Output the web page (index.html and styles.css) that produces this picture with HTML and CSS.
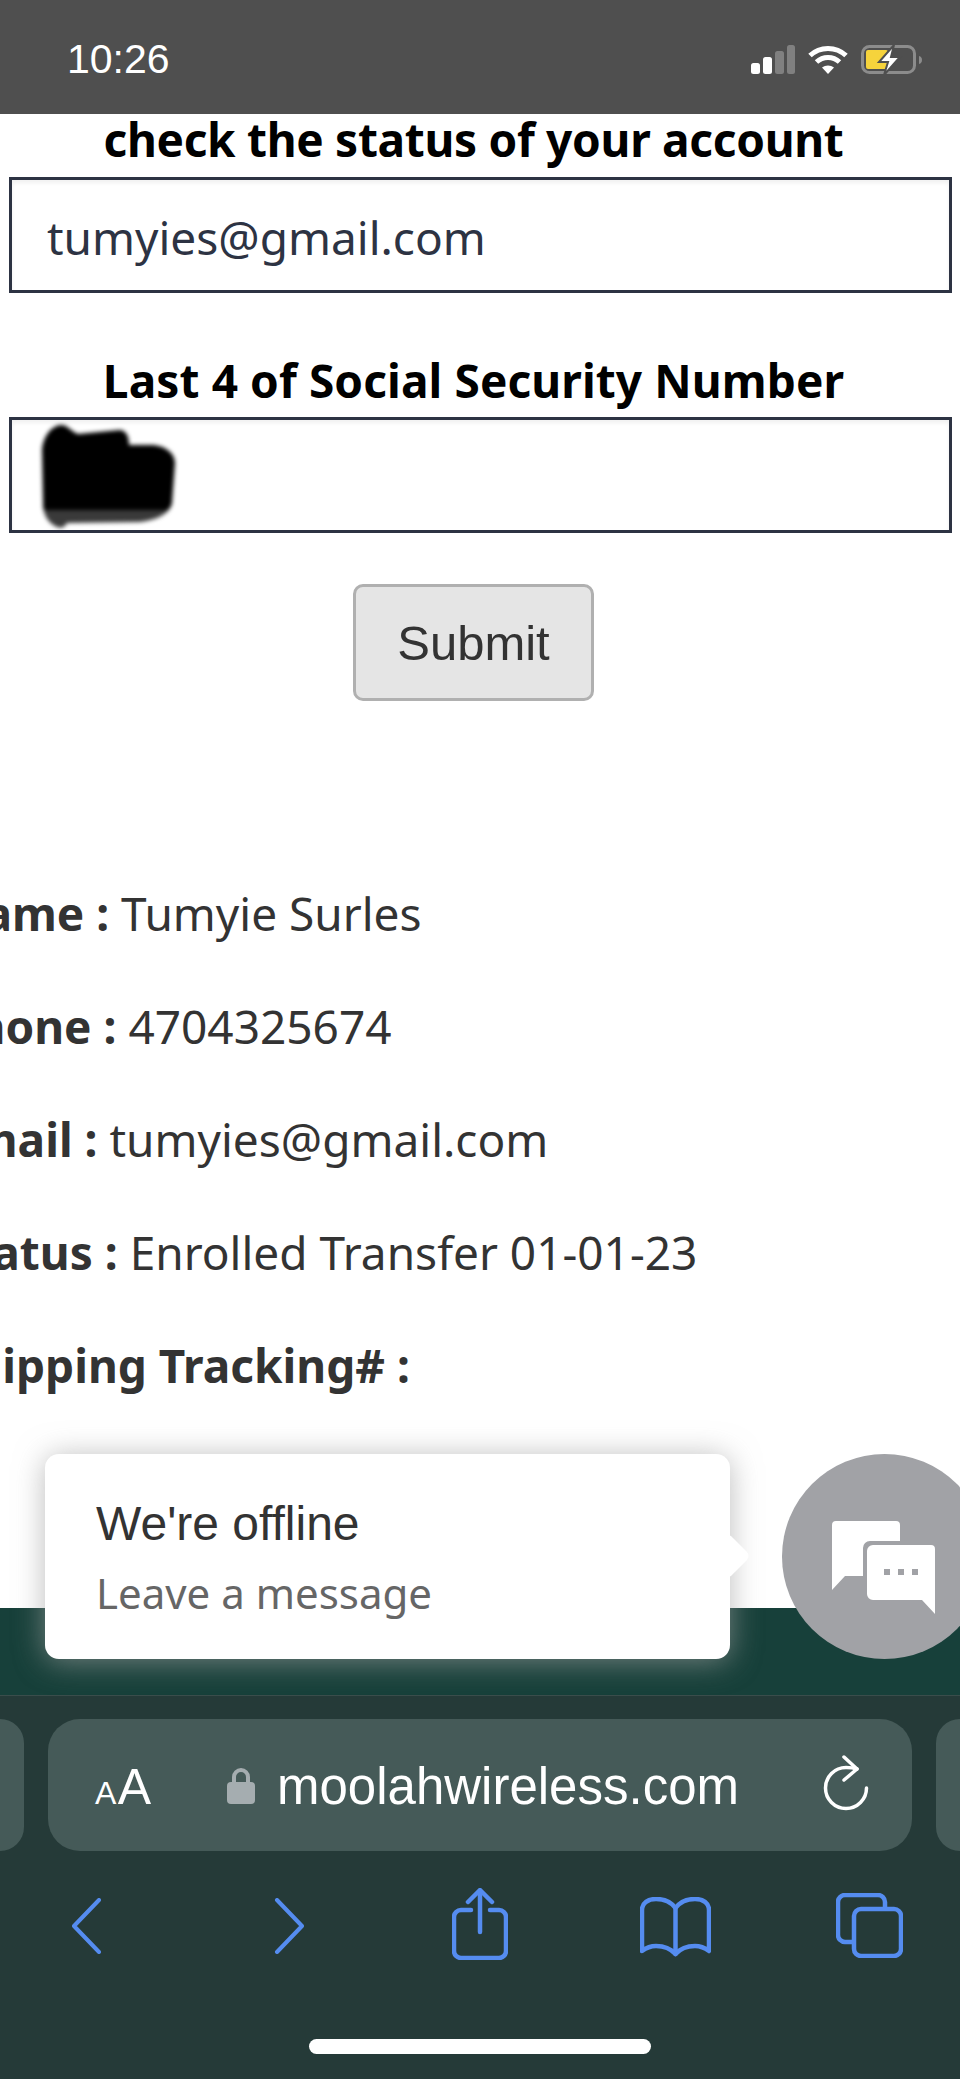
FILE: index.html
```html
<!DOCTYPE html>
<html lang="en">
<head>
  <meta charset="UTF-8">
  <meta name="viewport" content="width=device-width, initial-scale=1.0">
  <title>moolahwireless.com</title>
  <link rel="stylesheet" href="styles.css">
</head>
<body>
  <div class="phone">
    <!-- Status bar -->
    <div class="status-bar">
      <span class="clock">10:26</span>
      <div class="status-icons">
        <svg class="signal" width="44" height="30" viewBox="0 0 44 30">
          <rect x="0" y="18" width="9" height="11" rx="2.5" fill="#fff"/>
          <rect x="12" y="12" width="9" height="17" rx="2.5" fill="#fff"/>
          <rect x="24" y="6" width="9" height="23" rx="2.5" fill="#808080"/>
          <rect x="36" y="0" width="8" height="29" rx="2.5" fill="#808080"/>
        </svg>
        <svg class="wifi" width="40" height="30" viewBox="0 0 40 30" fill="none" stroke="#fff" stroke-width="5">
          <path d="M2 10.5c10-9.500 26-9.500 36 0"/>
          <path d="M8.500 17c6.500-6 16.500-6 23 0"/>
          <path d="M20 29l-6-6.500c3.500-2.800 8.500-2.800 12 0z" fill="#fff" stroke="none"/>
        </svg>
        <svg class="battery" width="62" height="30" viewBox="0 0 62 30">
          <rect x="1.500" y="1.500" width="52" height="26" rx="7" fill="none" stroke="#8c8c8c" stroke-width="3"/>
          <rect x="5" y="5" width="22" height="19" rx="2" fill="#f6d33c"/>
          <path d="M58 11c2 .5 3 2 3 4s-1 3.500-3 4z" fill="#8c8c8c"/>
          <path d="M33 0L18 17h9l-4 13 16-18h-9z" fill="#fff" stroke="#4f4f4f" stroke-width="2"/>
        </svg>
      </div>
    </div>

    <!-- Page -->
    <div class="page">
      <form class="lookup">
        <label class="field-label first" for="email">check the status of your account</label>
        <div class="text-box" id="email">tumyies@gmail.com</div>
        <label class="field-label" for="ssn">Last 4 of Social Security Number</label>
        <div class="text-box" id="ssn">
          <svg class="scribble" width="138" height="108" viewBox="0 0 138 108">
            <path d="M3 80h129c-2 10-14 17-32 19l-73 1c-2 4-6 6-10 4-9-4-14-12-14-24z" fill="#3a3a3a"/>
            <path d="M21 2c7 0 9 6 17 9l42-4c7 1 9 7 9 15h24c12 1 22 8 22 18l-3 40c-1 3-2 5-4 7H4c-1-2-1-4-1-7L2 27C3 15 10 3 21 2z" fill="#000"/>
          </svg>
        </div>
        <div class="submit-row"><div class="submit-btn">Submit</div></div>
      </form>

      <div class="details">
        <p><b>Name :</b> Tumyie Surles</p>
        <p><b>Phone :</b> 4704325674</p>
        <p><b>Email :</b> tumyies@gmail.com</p>
        <p><b>Status :</b> Enrolled Transfer 01-01-23</p>
        <p><b>Shipping Tracking# :</b></p>
      </div>

      <div class="page-footer"></div>

      <!-- Chat widget -->
      <div class="chat-popup">
        <div class="chat-title">We're offline</div>
        <div class="chat-sub">Leave a message</div>
        <span class="chat-arrow"></span>
      </div>
      <div class="chat-bubble">
        <svg width="104" height="94" viewBox="0 0 104 94">
          <path d="M4 0h60a4 4 0 0 1 4 4v16H38a7 7 0 0 0-7 7v28H13L0 69V4a4 4 0 0 1 4-4z" fill="#fff"/>
          <path d="M41 24h58a4 4 0 0 1 4 4v65L90 79H41a6 6 0 0 1-6-6V30a6 6 0 0 1 6-6z" fill="#fff"/>
          <rect x="52" y="48" width="6" height="6" fill="#a1a2a6"/>
          <rect x="66" y="48" width="6" height="6" fill="#a1a2a6"/>
          <rect x="80" y="48" width="6" height="6" fill="#a1a2a6"/>
        </svg>
      </div>
    </div>

    <!-- Safari toolbar -->
    <div class="toolbar">
      <div class="url-row">
        <div class="side-pill left"></div>
        <div class="url-bar">
          <span class="aa"><small>A</small>A</span>
          <div class="address">
            <svg class="lock" width="28" height="37" viewBox="0 0 28 37">
              <path d="M7 18V10a7 7 0 0 1 14 0v8" fill="none" stroke="#a5adb0" stroke-width="4"/>
              <rect x="0" y="15" width="28" height="22" rx="4" fill="#a5adb0"/>
            </svg>
            <span class="domain">moolahwireless.com</span>
          </div>
          <svg class="reload" width="48" height="56" viewBox="0 0 48 56" fill="none" stroke="#fff" stroke-width="3.500" stroke-linecap="round" stroke-linejoin="round">
            <path d="M44.500 33a20.500 20.500 0 1 1-20.500-20.500c4 0 8 .5 11 1.500"/>
            <path d="M22 2l13 12-13 11"/>
          </svg>
        </div>
        <div class="side-pill right"></div>
      </div>
      <div class="tool-icons">
        <svg class="back" width="31" height="56" viewBox="0 0 31 56" fill="none" stroke="#558cf0" stroke-width="4" stroke-linecap="round" stroke-linejoin="round"><path d="M28 2L3 28l25 26"/></svg>
        <svg class="forward" width="31" height="56" viewBox="0 0 31 56" fill="none" stroke="#558cf0" stroke-width="4" stroke-linecap="round" stroke-linejoin="round"><path d="M3 2l25 26L3 54"/></svg>
        <svg class="share" width="56" height="72" viewBox="0 0 56 72" fill="none" stroke="#558cf0" stroke-width="4.500" stroke-linecap="round" stroke-linejoin="round">
          <path d="M19 22H9a7 7 0 0 0-7 7v34a7 7 0 0 0 7 7h38a7 7 0 0 0 7-7V29a7 7 0 0 0-7-7H38"/>
          <path d="M28 44V3"/>
          <path d="M16 14L28 2l12 12"/>
        </svg>
        <svg class="book" width="71" height="60" viewBox="0 0 71 60" fill="none" stroke="#558cf0" stroke-width="4.500" stroke-linecap="round" stroke-linejoin="round">
          <path d="M35.500 11C31 5 24 2 16 2 8 2 2 6 2 13v41c4-3 9-5 14-5 8 0 15 3 19.500 8 4.500-5 11.500-8 19.500-8 5 0 10 2 14 5V13c0-7-6-11-14-11-8 0-15 3-19.500 9z"/>
          <path d="M35.500 11v46"/>
        </svg>
        <svg class="tabs" width="67" height="65" viewBox="0 0 67 65" fill="none" stroke="#558cf0" stroke-width="4.500" stroke-linejoin="round">
          <path d="M16 49H9a7 7 0 0 1-7-7V9a7 7 0 0 1 7-7h33a7 7 0 0 1 7 7v5"/>
          <rect x="18" y="16" width="47" height="47" rx="7"/>
        </svg>
      </div>
      <div class="home-bar"></div>
    </div>
  </div>
</body>
</html>
```

FILE: styles.css
```css
* {
  margin: 0;
  padding: 0;
  box-sizing: border-box;
}

html,
body {
  height: 100%;
  overflow: hidden;
}

body {
  font-family: "Noto Sans", sans-serif;
  background-color: #fff;
}

.phone {
  display: flex;
  flex-direction: column;
  height: 2079px;
  overflow: hidden;
}

/* Status bar */
.status-bar {
  height: 114px;
  background-color: #4f4f4f;
  display: flex;
  justify-content: space-between;
  align-items: center;
  padding: 4px 37px 0 67px;
  flex-shrink: 0;
}

.clock {
  font-family: "Liberation Sans", sans-serif;
  font-size: 41px;
  color: #fff;
}

.status-icons {
  display: flex;
  align-items: center;
  gap: 13px;
  margin-top: 2px;
}

/* Page */
.page {
  position: relative;
  flex: 1;
  display: flex;
  flex-direction: column;
  background-color: #fff;
}

.lookup {
  padding: 0 8px 0 9px;
}

.field-label {
  display: block;
  height: 69px;
  line-height: 64px;
  margin-top: 55px;
  padding-right: 14px;
  font-size: 46px;
  font-weight: 700;
  color: #000;
  text-align: center;
  letter-spacing: 0.1px;
}

.field-label.first {
  margin-top: 0;
  height: 63px;
  line-height: 50px;
  letter-spacing: -0.3px;
}

.text-box {
  position: relative;
  height: 116px;
  border: 3px solid #2d3343;
  box-shadow: inset 0 3px 4px rgba(0, 0, 0, 0.06);
  font-size: 46px;
  line-height: 115px;
  color: #2d3343;
  padding-left: 35px;
}

.scribble {
  position: absolute;
  left: 28px;
  top: 3px;
  filter: blur(2px);
}

.submit-row {
  display: flex;
  justify-content: center;
  margin-top: 51px;
  padding-right: 14px;
}

.submit-btn {
  width: 241px;
  height: 117px;
  border: 3px solid #b0b0b0;
  border-radius: 10px;
  background-color: #e5e5e5;
  color: #333;
  font-family: "Liberation Sans", sans-serif;
  font-size: 49px;
  line-height: 113px;
  text-align: center;
}

/* Account details: page is scrolled a little to the right */
.details {
  margin-top: 183px;
  margin-left: -53px;
  font-size: 46px;
  color: #333;
  white-space: nowrap;
}

.details p {
  height: 113px;
  line-height: 58px;
}

.details b {
  color: #333;
}

.page-footer {
  margin-top: auto;
  height: 87px;
  background-color: #17403a;
}

/* Chat widget */
.chat-popup {
  position: absolute;
  left: 45px;
  top: 1340px;
  width: 685px;
  height: 205px;
  padding: 42px 51px;
  background-color: #fff;
  border-radius: 14px;
  box-shadow: 0 2px 30px rgba(160, 160, 160, 0.7);
}

.chat-title {
  font-family: "Liberation Sans", sans-serif;
  font-size: 48px;
  line-height: 56px;
  color: #333;
}

.chat-sub {
  font-size: 42px;
  line-height: 56px;
  margin-top: 13px;
  color: #666;
}

.chat-arrow {
  position: absolute;
  right: -14px;
  top: 85px;
  width: 34px;
  height: 34px;
  background-color: #fff;
  border-radius: 6px;
  transform: rotate(45deg);
}

.chat-bubble {
  position: absolute;
  left: 782px;
  top: 1340px;
  width: 205px;
  height: 205px;
  border-radius: 50%;
  background-color: #a1a2a6;
  display: flex;
  align-items: flex-start;
  padding: 67px 0 0 50px;
}

/* Safari toolbar */
.toolbar {
  height: 384px;
  flex-shrink: 0;
  background-color: #253a38;
  border-top: 1px solid #3a4d4b;
  display: flex;
  flex-direction: column;
  position: relative;
}

.url-row {
  display: grid;
  grid-template-columns: 24px 864px 24px;
  margin-top: 23px;
  height: 132px;
  column-gap: 24px;
}

.side-pill {
  background-color: #455a58;
}

.side-pill.left {
  border-radius: 0 30px 30px 0;
}

.side-pill.right {
  border-radius: 30px 0 0 30px;
}

.url-bar {
  background-color: #455a58;
  border-radius: 32px;
  display: flex;
  align-items: center;
  padding: 0 42px 0 47px;
  color: #fff;
}

.aa {
  font-family: "Liberation Sans", sans-serif;
  font-size: 50px;
  line-height: 1;
  width: 132px;
  margin-top: 3px;
  letter-spacing: 1.5px;
}

.aa small {
  font-size: 32px;
}

.address {
  display: flex;
  align-items: center;
  gap: 22px;
}

.domain {
  font-family: "Liberation Sans", sans-serif;
  font-size: 51px;
  line-height: 1;
  margin-top: 3px;
}

.reload {
  margin-left: auto;
  margin-bottom: 4px;
}

.tool-icons {
  display: flex;
  align-items: flex-start;
  height: 72px;
  margin-top: 37px;
  padding-left: 71px;
}

.back,
.forward {
  margin-top: 10px;
}

.forward {
  margin-left: 172px;
}

.share {
  margin-left: 147px;
}

.book {
  margin-left: 132px;
  margin-top: 9px;
}

.tabs {
  margin-left: 125px;
  margin-top: 5px;
}

.home-bar {
  width: 342px;
  height: 15px;
  margin: 79px auto 0;
  border-radius: 8px;
  background-color: #fff;
}
```
